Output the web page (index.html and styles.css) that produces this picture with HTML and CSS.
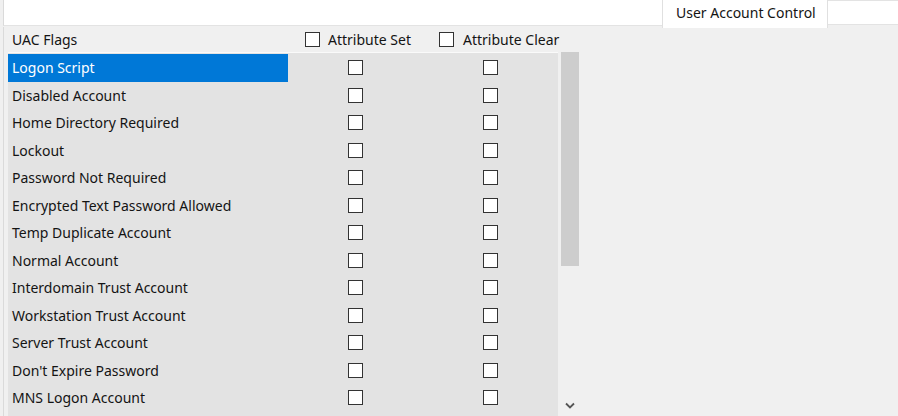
FILE: index.html
```html
<!DOCTYPE html>
<html>
<head>
<meta charset="utf-8">
<link rel="stylesheet" href="styles.css">
</head>
<body>
<div class="window">
  <div class="topbar">
    <div class="top-left"></div>
    <div class="tab">User Account Control</div>
    <div class="top-right"></div>
  </div>
  <div class="main">
    <div class="header">
      <div class="col-name hname">UAC Flags</div>
      <label class="col-attr hattr"><span class="cb"></span><span>Attribute Set</span></label>
      <label class="col-attr hattr hclear"><span class="cb"></span><span>Attribute Clear</span></label>
    </div>
    <div class="body">
      <div class="grid">
        <div class="row selected"><div class="col-name">Logon Script</div><div class="col-attr"><span class="cb"></span></div><div class="col-attr"><span class="cb"></span></div></div>
        <div class="row"><div class="col-name">Disabled Account</div><div class="col-attr"><span class="cb"></span></div><div class="col-attr"><span class="cb"></span></div></div>
        <div class="row"><div class="col-name">Home Directory Required</div><div class="col-attr"><span class="cb"></span></div><div class="col-attr"><span class="cb"></span></div></div>
        <div class="row"><div class="col-name">Lockout</div><div class="col-attr"><span class="cb"></span></div><div class="col-attr"><span class="cb"></span></div></div>
        <div class="row"><div class="col-name">Password Not Required</div><div class="col-attr"><span class="cb"></span></div><div class="col-attr"><span class="cb"></span></div></div>
        <div class="row"><div class="col-name">Encrypted Text Password Allowed</div><div class="col-attr"><span class="cb"></span></div><div class="col-attr"><span class="cb"></span></div></div>
        <div class="row"><div class="col-name">Temp Duplicate Account</div><div class="col-attr"><span class="cb"></span></div><div class="col-attr"><span class="cb"></span></div></div>
        <div class="row"><div class="col-name">Normal Account</div><div class="col-attr"><span class="cb"></span></div><div class="col-attr"><span class="cb"></span></div></div>
        <div class="row"><div class="col-name">Interdomain Trust Account</div><div class="col-attr"><span class="cb"></span></div><div class="col-attr"><span class="cb"></span></div></div>
        <div class="row"><div class="col-name">Workstation Trust Account</div><div class="col-attr"><span class="cb"></span></div><div class="col-attr"><span class="cb"></span></div></div>
        <div class="row"><div class="col-name">Server Trust Account</div><div class="col-attr"><span class="cb"></span></div><div class="col-attr"><span class="cb"></span></div></div>
        <div class="row"><div class="col-name">Don't Expire Password</div><div class="col-attr"><span class="cb"></span></div><div class="col-attr"><span class="cb"></span></div></div>
        <div class="row"><div class="col-name">MNS Logon Account</div><div class="col-attr"><span class="cb"></span></div><div class="col-attr"><span class="cb"></span></div></div>
      </div>
      <div class="scrollbar">
        <div class="thumb"></div>
        <div class="track"></div>
        <svg class="arrow" width="10" height="7" viewBox="0 0 10 7"><path d="M1 1.5 L5 5.5 L9 1.5" fill="none" stroke="#555" stroke-width="1.8"/></svg>
      </div>
    </div>
  </div>
</div>
</body>
</html>
```
FILE: styles.css
```css
html, body {
  margin: 0;
  padding: 0;
}
body {
  width: 898px;
  height: 416px;
  overflow: hidden;
  background: #f0f0f0;
  font-family: "Noto Sans", "Open Sans", sans-serif;
  font-size: 14px;
  color: #141414;
}
.window {
  display: flex;
  flex-direction: column;
  height: 416px;
}
.topbar {
  display: flex;
  height: 27px;
  background: #f0f0f0;
}
.top-left {
  flex: 1;
  background: #fff;
  margin-left: 3px;
  border-left: 1px solid #dadada;
  border-bottom: 1px solid #e3e3e3;
  height: 25px;
}
.tab {
  width: 166px;
  height: 28px;
  margin-bottom: -1px;
  background: #fff;
  border-left: 1px solid #e0e0e0;
  border-right: 1px solid #e0e0e0;
  box-sizing: border-box;
  padding-left: 13px;
  line-height: 25px;
  position: relative;
  z-index: 1;
}
.top-right {
  width: 70px;
  height: 25px;
  background: #fff;
  border-top: 1px solid #e3e3e3;
  border-bottom: 1px solid #e3e3e3;
  box-sizing: border-box;
}
.main {
  flex: 1;
  display: flex;
  flex-direction: column;
  margin-left: 3px;
  border-left: 1px solid #dadada;
  padding-left: 4px;
  min-height: 0;
}
.header {
  display: flex;
  height: 25px;
  align-items: center;
}
.col-name {
  width: 280px;
  flex: none;
  box-sizing: border-box;
  padding-left: 4px;
  white-space: nowrap;
}
.col-attr {
  width: 135px;
  flex: none;
  display: flex;
  align-items: center;
  justify-content: center;
}
.hattr {
  justify-content: flex-start;
  padding-left: 17px;
  box-sizing: border-box;
  gap: 8px;
  white-space: nowrap;
}
.hclear {
  padding-left: 16px;
  gap: 9px;
}
.cb {
  display: inline-block;
  width: 15px;
  height: 15px;
  box-sizing: border-box;
  border: 1px solid #333;
  background: #fff;
  flex: none;
}
.body {
  flex: 1;
  display: flex;
  min-height: 0;
}
.grid {
  width: 550px;
  background: #e3e3e3;
  border-top: 1px solid #fafafa;
  padding-top: 1px;
  overflow: hidden;
}
.row {
  display: flex;
  height: 27.5px;
  align-items: center;
}
.row .col-name {
  height: 27.5px;
  line-height: 27px;
}
.row.selected .col-name {
  background: #0078d7;
  color: #fff;
}
.scrollbar {
  width: 20px;
  margin-left: 2px;
  display: flex;
  flex-direction: column;
  align-items: center;
}
.thumb {
  width: 18px;
  height: 214px;
  background: #cdcdcd;
}
.track {
  flex: 1;
}
.arrow {
  margin-bottom: 7px;
}
```
